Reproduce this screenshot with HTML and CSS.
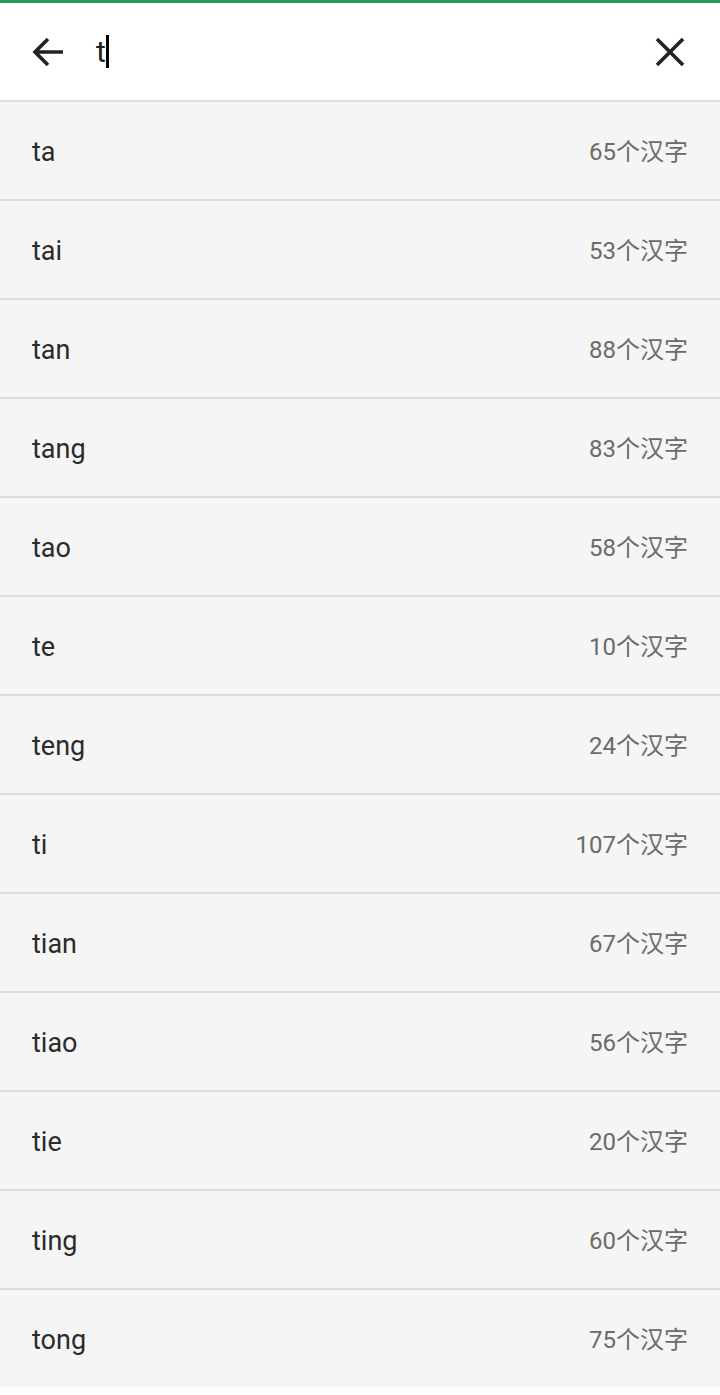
FILE: index.html
```html
<!DOCTYPE html>
<html lang="zh">
<head>
<meta charset="utf-8">
<link rel="stylesheet" href="styles.css">
</head>
<body>
<div class="app">
  <header class="bar">
    <svg class="icon back" viewBox="0 0 36 36" width="36" height="36"><path d="M33 18H5M18 5L5 18l13 13" fill="none" stroke="#222" stroke-width="3.6" stroke-linecap="butt" stroke-linejoin="miter"/></svg>
    <div class="input"><span class="typed">t</span><span class="caret"></span></div>
    <svg class="icon close" viewBox="0 0 32 32" width="32" height="32"><path d="M3 3L29 29M29 3L3 29" fill="none" stroke="#222" stroke-width="3.6"/></svg>
  </header>
  <ul class="list">
    <li class="row"><span class="py">ta</span><span class="cnt">65个汉字</span></li>
    <li class="row"><span class="py">tai</span><span class="cnt">53个汉字</span></li>
    <li class="row"><span class="py">tan</span><span class="cnt">88个汉字</span></li>
    <li class="row"><span class="py">tang</span><span class="cnt">83个汉字</span></li>
    <li class="row"><span class="py">tao</span><span class="cnt">58个汉字</span></li>
    <li class="row"><span class="py">te</span><span class="cnt">10个汉字</span></li>
    <li class="row"><span class="py">teng</span><span class="cnt">24个汉字</span></li>
    <li class="row"><span class="py">ti</span><span class="cnt">107个汉字</span></li>
    <li class="row"><span class="py">tian</span><span class="cnt">67个汉字</span></li>
    <li class="row"><span class="py">tiao</span><span class="cnt">56个汉字</span></li>
    <li class="row"><span class="py">tie</span><span class="cnt">20个汉字</span></li>
    <li class="row"><span class="py">ting</span><span class="cnt">60个汉字</span></li>
    <li class="row last"><span class="py">tong</span><span class="cnt">75个汉字</span></li>
  </ul>
</div>
</body>
</html>
```

FILE: styles.css
```css
html, body {
  margin: 0;
  padding: 0;
  background: #fdfdfd;
}
body {
  font-family: Roboto, "Noto Sans CJK SC", sans-serif;
  width: 720px;
  height: 1395px;
  overflow: hidden;
}
.app {
  display: flex;
  flex-direction: column;
}
.bar {
  height: 97px;
  border-top: 3px solid #1e9e57;
  border-bottom: 2px solid #dedede;
  background: #fff;
  display: flex;
  align-items: center;
  padding: 0 34px 0 30px;
}
.icon {
  flex: none;
  display: block;
}
.input {
  flex: 1;
  display: flex;
  align-items: center;
  margin-left: 30px;
  height: 40px;
}
.typed {
  font-size: 30px;
  color: #222;
  line-height: 34px;
}
.caret {
  width: 3px;
  height: 33px;
  background: #000;
}
.list {
  list-style: none;
  margin: 0;
  padding: 0;
}
.row {
  height: 95px;
  padding: 2px 32px 0;
  border-bottom: 2px solid #dcdcdc;
  background: #f5f5f5;
  display: flex;
  align-items: center;
  justify-content: space-between;
}
.row.last {
  border-bottom: none;
}
.py {
  font-size: 27px;
  color: #2b2b2b;
  line-height: 32px;
}
.cnt {
  font-size: 24px;
  color: #6b6b6b;
  line-height: 28px;
}
```
